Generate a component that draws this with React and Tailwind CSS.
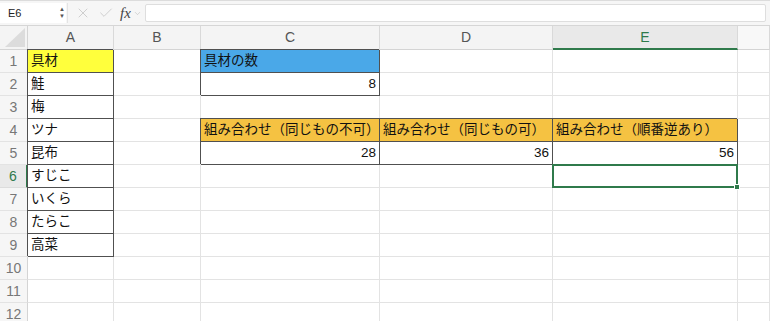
import { X, Check, ChevronDown } from 'lucide-react';

const FONT = '"Liberation Sans", "Noto Sans CJK JP", sans-serif';
const COLS = ['A', 'B', 'C', 'D', 'E', 'F'];
const GRID = 'grid grid-cols-[28px_86px_87px_179px_173px_185px_1fr]';

// cell contents by row (1-based) and column letter
const CELLS = {
  1: { A: { text: '具材', bg: 'bg-[#ffff3c]', box: true }, C: { text: '具材の数', bg: 'bg-[#4aa8e8]', box: true } },
  2: { A: { text: '鮭', box: true }, C: { text: '8', right: true, box: true } },
  3: { A: { text: '梅', box: true } },
  4: {
    A: { text: 'ツナ', box: true },
    C: { text: '組み合わせ（同じもの不可）', bg: 'bg-[#f5c242]', box: true },
    D: { text: '組み合わせ（同じもの可）', bg: 'bg-[#f5c242]', box: true },
    E: { text: '組み合わせ（順番逆あり）', bg: 'bg-[#f5c242]', box: true },
  },
  5: {
    A: { text: '昆布', box: true },
    C: { text: '28', right: true, box: true },
    D: { text: '36', right: true, box: true },
    E: { text: '56', right: true, box: true },
  },
  6: { A: { text: 'すじこ', box: true }, E: { selected: true } },
  7: { A: { text: 'いくら', box: true } },
  8: { A: { text: 'たらこ', box: true } },
  9: { A: { text: '高菜', box: true } },
};

function Cell({ cell }) {
  if (!cell) {
    return <div className="h-[23px] border-r border-b border-[#e3e3e3]" />;
  }
  const border = cell.box
    ? 'border-r border-b border-[#505050] shadow-[-1px_-1px_0_0_#505050]'
    : 'border-r border-b border-[#e3e3e3]';
  return (
    <div
      className={`relative h-[23px] flex items-center overflow-visible whitespace-nowrap px-[3px] text-[13.5px] text-[#111] ${border} ${cell.bg || ''} ${cell.right ? 'justify-end' : ''}`}
    >
      {cell.text}
      {cell.selected && (
        <div className="absolute -left-px -top-px right-[-1px] bottom-[-1px] border-2 border-[#2f7a4b]">
          <div className="absolute -right-[4px] -bottom-[4px] h-[6px] w-[6px] bg-[#2f7a4b] border border-white" />
        </div>
      )}
    </div>
  );
}

export default function App() {
  const rows = Array.from({ length: 12 }, (_, i) => i + 1);

  return (
    <div className="h-[321px] w-[770px] overflow-hidden bg-white" style={{ fontFamily: FONT }}>
      {/* ---- formula bar ---- */}
      <div className="flex h-[25px] items-center border-t border-[#dcdcdc] bg-[#f6f6f6] pr-1">
        <div className="flex h-[20px] w-[58px] items-center bg-white pl-[8px] text-[11px] text-[#222]">E6</div>
        <div className="flex h-[20px] w-[8px] flex-col items-center justify-center bg-white text-[6px] leading-[7px] text-[#555]">
          <span>▲</span>
          <span>▼</span>
        </div>
        <div className="mx-[1px] h-[20px] w-px bg-[#e4e4e4]" />
        <div className="flex items-center gap-[7px] pl-[6px]">
          <X size={16} strokeWidth={1.2} className="text-[#c4c4c4]" />
          <Check size={16} strokeWidth={1.2} className="text-[#c4c4c4]" />
        </div>
        <span className="ml-[6px] font-['Liberation_Serif'] text-[15px] italic text-[#444]">fx</span>
        <ChevronDown size={9} strokeWidth={1.5} className="ml-[2px] text-[#bbb]" />
        <div className="ml-[3px] h-[18px] flex-1 rounded-[2px] border border-[#dedede] bg-white" />
      </div>

      {/* ---- column headers ---- */}
      <div className={`${GRID} h-[25px] border-t border-[#d6d6d6] bg-[#f4f4f4]`}>
        <div className="flex items-end justify-end border-r border-b border-[#d4d4d4] pr-[2px] pb-[2px]">
          <svg width="20" height="19" viewBox="0 0 20 19">
            <polygon points="20,0 20,19 0,19" fill="#dcdcdc" />
          </svg>
        </div>
        {COLS.map((c) => (
          <div
            key={c}
            className={`flex items-center justify-center border-r border-[#d9d9d9] text-[14px] ${
              c === 'E'
                ? 'border-b-2 border-b-[#2f7a4b] bg-[#e9e9e9] text-[#2f7a4b]'
                : c === 'F'
                  ? 'border-b border-b-[#d4d4d4] bg-[#f8f8f8]'
                  : 'border-b border-b-[#d4d4d4] text-[#555]'
            }`}
          >
            {c === 'F' ? '' : c}
          </div>
        ))}
      </div>

      {/* ---- sheet body ---- */}
      {rows.map((r) => (
        <div key={r} className={GRID}>
          <div
            className={`flex h-[23px] items-center justify-center border-b text-[14px] ${
              r === 6
                ? 'border-r-2 border-r-[#2f7a4b] border-b-[#dcdcdc] bg-[#e9e9e9] text-[#2f7a4b]'
                : 'border-r border-r-[#d4d4d4] border-b-[#e3e3e3] bg-[#f6f6f6] text-[#777]'
            }`}
          >
            {r}
          </div>
          {COLS.map((c) => (
            <Cell key={c} cell={CELLS[r] && CELLS[r][c]} />
          ))}
        </div>
      ))}
    </div>
  );
}
